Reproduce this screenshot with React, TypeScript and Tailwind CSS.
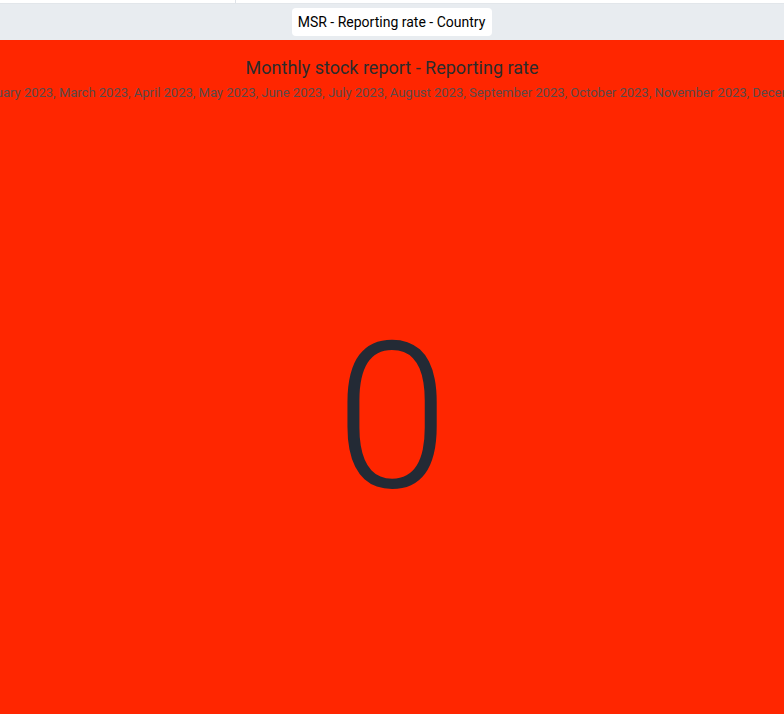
export default function App() {
  const months = [
    "January",
    "February",
    "March",
    "April",
    "May",
    "June",
    "July",
    "August",
    "September",
    "October",
    "November",
    "December",
  ];
  const periods = months.slice(1).map((m) => `${m} 2023`).join(", ");

  return (
    <div className="flex h-[714px] w-[784px] flex-col overflow-hidden font-['Roboto',sans-serif]">
      {/* strip above the item header */}
      <div className="flex h-[3px] bg-white">
        <div className="w-[236px] border-r border-[#dfe3e8]" />
      </div>
      <div className="flex h-[37px] items-center justify-center border-t border-[#e2e6ea] bg-[#e8ecf0]">
        <span className="rounded-[4px] bg-white py-[5px] pl-[6px] pr-[7px] text-[14px] leading-[18px] text-black">
          MSR - Reporting rate - Country
        </span>
      </div>

      <div className="flex flex-1 flex-col bg-[#ff2600]">
        <div className="pt-[16px] text-center text-[18px] leading-[24px] text-[#2c2c2c]">
          Monthly stock report - Reporting rate
        </div>
        <div className="mt-[4px] flex justify-center overflow-hidden whitespace-nowrap pl-[30px] text-[13px] leading-[18px] text-[#5a4a4a]">
          <span className="shrink-0">{periods}</span>
        </div>
        <div className="flex flex-1 items-center justify-center pt-[20px]">
          <span className="text-[204px] font-light leading-none text-[#232a35]">0</span>
        </div>
      </div>
    </div>
  );
}
